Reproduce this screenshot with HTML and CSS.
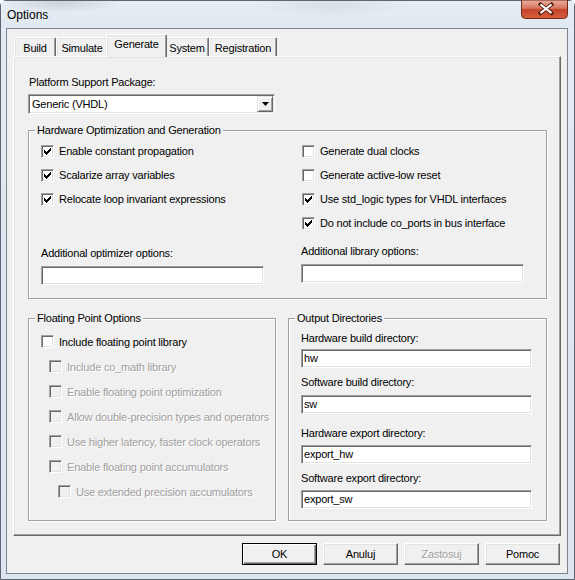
FILE: index.html
```html
<!DOCTYPE html>
<html>
<head>
<meta charset="utf-8">
<title>Options</title>
<link rel="stylesheet" href="styles.css">
</head>
<body>
<div class="window">
  <div class="titlebar">
    <span class="title">Options</span>
    <div class="close">
      <svg width="47" height="19" viewBox="0 0 47 19">
        <defs>
          <linearGradient id="cg" x1="0" y1="0" x2="0" y2="1">
            <stop offset="0" stop-color="#eab0a0"/>
            <stop offset="0.45" stop-color="#d7735b"/>
            <stop offset="0.52" stop-color="#c3442a"/>
            <stop offset="1" stop-color="#d9603f"/>
          </linearGradient>
        </defs>
        <path d="M0.5 0 H46.5 V14.5 Q46.5 18.5 42.5 18.5 H4.5 Q0.5 18.5 0.5 14.5 Z" fill="url(#cg)" stroke="#6d2a1c"/>
        <path d="M19.5 4.5 L30.5 13 M30.5 4.5 L19.5 13" stroke="#5a2014" stroke-width="3.8" stroke-linecap="square"/>
        <path d="M19.5 4.5 L30.5 13 M30.5 4.5 L19.5 13" stroke="#ffffff" stroke-width="2.2"/>
      </svg>
    </div>
  </div>
  <div class="client">
    <div class="tabs">
      <div class="tab w-build">Build</div>
      <div class="tab w-sim">Simulate</div>
      <div class="tab active w-gen">Generate</div>
      <div class="tab w-sys">System</div>
      <div class="tab w-reg">Registration</div>
    </div>
    <div class="panel">
      <div class="lbl">Platform Support Package:</div>
      <div class="combo">
        <span class="combo-text">Generic (VHDL)</span>
        <span class="combo-btn">
          <svg width="7" height="4" viewBox="0 0 7 4"><path d="M0 0 H7 L3.5 4 Z" fill="#000"/></svg>
        </span>
      </div>

      <fieldset class="group hw">
        <legend>Hardware Optimization and Generation</legend>
        <div class="hw-cols">
          <div class="col">
            <div class="cb-row"><span class="cb checked"><svg width="11" height="11" viewBox="0 0 11 11"><path class="chk" d="M2 4 H3 V5 H4 V6 H5 V5 H6 V4 H7 V3 H8 V2 H9 V5 H8 V6 H7 V7 H6 V8 H5 V9 H4 V8 H3 V7 H2 Z"/></svg></span><span>Enable constant propagation</span></div>
            <div class="cb-row"><span class="cb checked"><svg width="11" height="11" viewBox="0 0 11 11"><path class="chk" d="M2 4 H3 V5 H4 V6 H5 V5 H6 V4 H7 V3 H8 V2 H9 V5 H8 V6 H7 V7 H6 V8 H5 V9 H4 V8 H3 V7 H2 Z"/></svg></span><span>Scalarize array variables</span></div>
            <div class="cb-row"><span class="cb checked"><svg width="11" height="11" viewBox="0 0 11 11"><path class="chk" d="M2 4 H3 V5 H4 V6 H5 V5 H6 V4 H7 V3 H8 V2 H9 V5 H8 V6 H7 V7 H6 V8 H5 V9 H4 V8 H3 V7 H2 Z"/></svg></span><span>Relocate loop invariant expressions</span></div>
            <div class="lbl opt-lbl">Additional optimizer options:</div>
            <div class="edit w223"></div>
          </div>
          <div class="col">
            <div class="cb-row r"><span class="cb"></span><span>Generate dual clocks</span></div>
            <div class="cb-row r"><span class="cb"></span><span>Generate active-low reset</span></div>
            <div class="cb-row r"><span class="cb checked"><svg width="11" height="11" viewBox="0 0 11 11"><path class="chk" d="M2 4 H3 V5 H4 V6 H5 V5 H6 V4 H7 V3 H8 V2 H9 V5 H8 V6 H7 V7 H6 V8 H5 V9 H4 V8 H3 V7 H2 Z"/></svg></span><span>Use std_logic types for VHDL interfaces</span></div>
            <div class="cb-row r"><span class="cb checked"><svg width="11" height="11" viewBox="0 0 11 11"><path class="chk" d="M2 4 H3 V5 H4 V6 H5 V5 H6 V4 H7 V3 H8 V2 H9 V5 H8 V6 H7 V7 H6 V8 H5 V9 H4 V8 H3 V7 H2 Z"/></svg></span><span>Do not include co_ports in bus interface</span></div>
            <div class="lbl lib-lbl">Additional library options:</div>
            <div class="edit w223"></div>
          </div>
        </div>
      </fieldset>

      <div class="lower">
        <fieldset class="group fp">
          <legend>Floating Point Options</legend>
          <div class="fp-body">
            <div class="cb-row f"><span class="cb"></span><span>Include floating point library</span></div>
            <div class="cb-row f dis i1"><span class="cb"></span><span>Include co_math library</span></div>
            <div class="cb-row f dis i1"><span class="cb"></span><span>Enable floating point optimization</span></div>
            <div class="cb-row f dis i1"><span class="cb"></span><span>Allow double-precision types and operators</span></div>
            <div class="cb-row f dis i1"><span class="cb"></span><span>Use higher latency, faster clock operators</span></div>
            <div class="cb-row f dis i1"><span class="cb"></span><span>Enable floating point accumulators</span></div>
            <div class="cb-row f dis i2"><span class="cb"></span><span>Use extended precision accumulators</span></div>
          </div>
        </fieldset>
        <fieldset class="group out">
          <legend>Output Directories</legend>
          <div class="out-body">
            <div class="lbl">Hardware build directory:</div>
            <div class="edit w231 e1">hw</div>
            <div class="lbl l2">Software build directory:</div>
            <div class="edit w231 e2">sw</div>
            <div class="lbl l3">Hardware export directory:</div>
            <div class="edit w231 e3">export_hw</div>
            <div class="lbl l2">Software export directory:</div>
            <div class="edit w231 e3">export_sw</div>
          </div>
        </fieldset>
      </div>
    </div>
    <div class="buttons">
      <div class="btn default">OK</div>
      <div class="btn">Anuluj</div>
      <div class="btn disabled">Zastosuj</div>
      <div class="btn">Pomoc</div>
    </div>
  </div>
</div>
</body>
</html>
```
FILE: styles.css
```css
* { box-sizing: border-box; }
html, body { margin: 0; padding: 0; }
body {
  width: 575px;
  height: 580px;
  overflow: hidden;
  background: #ffffff;
  font-family: "Liberation Sans", Arial, sans-serif;
  font-size: 11px;
  color: #000;
}

.window {
  width: 575px;
  height: 580px;
  border: 1px solid #5b6672;
  border-radius: 6px 6px 0 0;
  background: linear-gradient(180deg, #e5ecf4 0%, #dfe7f0 40%, #dde5ee 100%);
  display: flex;
  flex-direction: column;
}

.titlebar {
  height: 27px;
  display: flex;
  align-items: center;
  padding-left: 6px;
  background:
    radial-gradient(ellipse 60px 10px at 60px 2px, rgba(150,160,170,0.35), rgba(150,160,170,0)),
    radial-gradient(ellipse 80px 12px at 330px 4px, rgba(170,180,190,0.25), rgba(170,180,190,0)),
    linear-gradient(180deg, #e7eef5 0%, #e0e8f1 100%);
}
.title {
  font-size: 12px;
  color: #000;
  line-height: 14px;
}
.close {
  margin-left: auto;
  margin-right: 6px;
  align-self: flex-start;
  margin-top: -1px;
  width: 47px;
  height: 19px;
}
.close svg { display: block; }

.client {
  margin: 0 6px 5px 5px;
  width: 562px;
  height: 546px;
  border: 1px solid #7c8691;
  background: #f0f0f0;
  display: flex;
  flex-direction: column;
}

/* Tabs */
.tabs {
  display: flex;
  align-items: flex-end;
  height: 22px;
  margin-top: 5px;
  margin-left: 7px;
}
.tab {
  height: 19px;
  padding-top: 4px;
  line-height: 13px;
  text-align: center;
  background: #f0f0f0;
  border-top: 1px solid #fff;
  border-left: 1px solid #fff;
  border-right: 1px solid #696969;
  border-radius: 2px 2px 0 0;
  box-shadow: inset -1px 0 0 #a0a0a0, inset 1px 1px 0 #e3e3e3;
  letter-spacing: -0.2px;
}
.w-build { width: 42px; }
.w-sim { width: 52px; }
.w-gen { width: 57px; }
.w-sys { width: 44px; }
.w-reg { width: 68px; }
.tab.active {
  height: 23px;
  width: 61px;
  margin: 0 -2px -1px -2px;
  padding-top: 3px;
  position: relative;
  z-index: 1;
}

/* Panel */
.panel {
  margin-left: 6px;
  width: 548px;
  height: 480px;
  border-top: 1px solid #fff;
  border-left: 1px solid #fff;
  border-right: 1px solid #696969;
  border-bottom: 1px solid #696969;
  box-shadow: inset -1px -1px 0 #a0a0a0, inset 1px 1px 0 #e3e3e3;
  padding: 19px 0 0 15px;
}

.lbl {
  line-height: 13px;
  height: 13px;
  white-space: nowrap;
  letter-spacing: -0.2px;
}

.combo {
  margin-top: 5px;
  margin-left: -1px;
  width: 247px;
  height: 20px;
  background: #fff;
  border: 1px solid;
  border-color: #a0a0a0 #fff #fff #a0a0a0;
  box-shadow: inset 1px 1px 0 #696969, inset -1px -1px 0 #e3e3e3;
  display: flex;
  align-items: center;
  padding: 1px;
}
.combo-text {
  flex: 1;
  padding-left: 2px;
  letter-spacing: -0.2px;
}
.combo-btn {
  width: 16px;
  height: 16px;
  background: #f0f0f0;
  border: 1px solid;
  border-color: #e3e3e3 #696969 #696969 #e3e3e3;
  box-shadow: inset 1px 1px 0 #fff, inset -1px -1px 0 #a0a0a0;
  display: flex;
  align-items: center;
  justify-content: center;
}
.combo-btn svg { display: block; }

/* Group boxes */
fieldset.group {
  margin: 0;
  padding: 0;
  min-width: 0;
  border: 1px solid #a0a0a0;
  box-shadow: 1px 1px 0 #fff, inset 1px 1px 0 #fff;
}
fieldset.group legend {
  margin-left: 6px;
  padding: 0 2px;
  line-height: 13px;
  height: 13px;
  background: #f0f0f0;
  letter-spacing: -0.2px;
}
fieldset.group.hw {
  margin-top: 10px;
  margin-left: -1px;
  width: 519px;
  height: 175px;
}
.hw-cols {
  display: grid;
  grid-template-columns: 260px 1fr;
  padding: 2px 0 0 12px;
}
.col { display: flex; flex-direction: column; }

.cb-row {
  height: 24px;
  display: flex;
  align-items: center;
  gap: 5px;
  white-space: nowrap;
  letter-spacing: -0.2px;
}
.cb-row.r { padding-left: 1px; }
.cb-row.f { height: 25px; }
.cb-row.i1 { padding-left: 8px; }
.cb-row.i2 { padding-left: 17px; }

.cb {
  flex: none;
  width: 13px;
  height: 13px;
  background: #fff;
  border: 1px solid;
  border-color: #a0a0a0 #fff #fff #a0a0a0;
  box-shadow: inset 1px 1px 0 #696969, inset -1px -1px 0 #e3e3e3;
}
.cb svg { display: block; }
.chk { fill: #000; }
.dis { color: #a0a0a0; }
.dis span:last-child { text-shadow: 1px 1px 0 #fff; }
.dis .cb { background: #f0f0f0; }

.opt-lbl { margin-top: 36px; }
.lib-lbl { margin-top: 10px; }

.edit {
  height: 19px;
  background: #fff;
  border: 1px solid;
  border-color: #a0a0a0 #fff #fff #a0a0a0;
  box-shadow: inset 1px 1px 0 #696969, inset -1px -1px 0 #e3e3e3;
  padding: 1px 0 0 2px;
  line-height: 15px;
  letter-spacing: -0.2px;
  margin-top: 6px;
}
.w223 { width: 223px; }
.w231 { width: 231px; }

.lower {
  display: flex;
  gap: 12px;
  margin-top: 13px;
  margin-left: -1px;
}
fieldset.group.fp { width: 248px; height: 209px; }
fieldset.group.out { width: 259px; height: 209px; }
.fp-body { padding: 4px 0 0 12px; }
.out-body { padding: 7px 0 0 12px; }
.out-body .edit.e1 { margin-top: 4px; }
.out-body .edit.e2 { margin-top: 6px; }
.out-body .edit.e3 { margin-top: 5px; }
.out-body .lbl.l2 { margin-top: 8px; }
.out-body .lbl.l3 { margin-top: 13px; }

/* Buttons */
.buttons {
  display: flex;
  justify-content: flex-end;
  gap: 6px;
  margin-top: 7px;
  padding-right: 7px;
}
.btn {
  width: 75px;
  height: 22px;
  background: #f0f0f0;
  border: 1px solid;
  border-color: #fff #696969 #696969 #fff;
  box-shadow: inset -1px -1px 0 #a0a0a0, inset 1px 1px 0 #e3e3e3;
  display: flex;
  align-items: center;
  justify-content: center;
  letter-spacing: -0.2px;
}
.btn.default {
  border: 1px solid #000;
  box-shadow: inset 1px 1px 0 #fff, inset -1px -1px 0 #696969, inset -2px -2px 0 #a0a0a0;
}
.btn.disabled {
  color: #a0a0a0;
  text-shadow: 1px 1px 0 #fff;
}
```
